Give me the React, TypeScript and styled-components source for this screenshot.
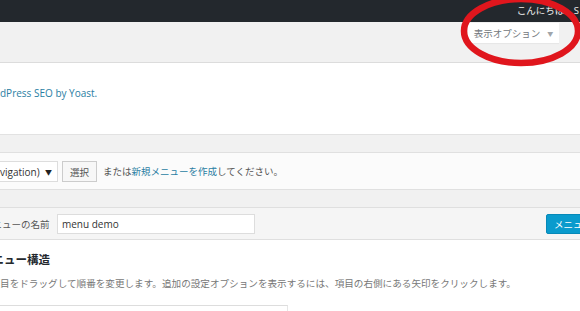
import React from "react";
import styled, { createGlobalStyle } from "styled-components";

const Global = createGlobalStyle`
  html, body { margin: 0; padding: 0; background: #f1f1f1; }
  body { width: 580px; height: 311px; overflow: hidden; font-family: "Open Sans", "Noto Sans CJK JP", sans-serif; }
  #root { position: relative; width: 580px; height: 311px; overflow: hidden; }
`;

const jp = `"Open Sans", "Noto Sans CJK JP", sans-serif`;

const AdminBar = styled.div`
  height: 22px;
  background: #23282d;
  display: flex;
  justify-content: flex-end;
  align-items: center;
  overflow: hidden;
`;

const Howdy = styled.span`
  font-family: ${jp};
  font-size: 9.5px;
  color: #eee;
  white-space: nowrap;
  margin-right: 1px;
  margin-top: -2px;
`;

const ScreenMeta = styled.div`
  height: 40px;
  display: flex;
  justify-content: flex-end;
  padding-right: 21px;
`;

const ScreenTab = styled.div`
  margin-top: 1px;
  height: 20px;
  width: 91px;
  background: #fff;
  box-shadow: 0 1px 1px rgba(0,0,0,0.04);
  display: flex;
  align-items: center;
  justify-content: center;
  gap: 7px;
  font-family: ${jp};
  font-size: 9.5px;
  color: #72777c;
`;

const Caret = styled.span`
  font-size: 6px;
  color: #a0a5aa;
`;

const Notice = styled.div`
  height: 48px;
  padding-top: 23px;
  background: #fff;
  border-top: 1px solid #dcdcdc;
  border-bottom: 1px solid #e2e2e2;
  display: flex;
  align-items: flex-start;
`;

const NoticeText = styled.span`
  font-size: 10px;
  line-height: 14px;
  color: #2a7ea3;
`;

const Gap = styled.div<{ h: number }>`
  height: ${(p) => p.h}px;
`;

const ManageBox = styled.div`
  height: 36px;
  background: #fbfbfb;
  border-top: 1px solid #e0e0e0;
  border-bottom: 1px solid #e0e0e0;
  display: flex;
  align-items: center;
  gap: 4px;
`;

const SelectBox = styled.div`
  height: 21px;
  width: 58px;
  background: #fff;
  border: 1px solid #ddd;
  border-left: none;
  display: flex;
  align-items: center;
  justify-content: space-between;
  padding-right: 5px;
  box-sizing: border-box;
  font-size: 10px;
  color: #333;
  margin-top: 1px;
`;

const SelectCaret = styled.span`
  font-size: 7px;
  color: #222;
`;

const Button = styled.div`
  height: 21px;
  width: 35px;
  box-sizing: border-box;
  border: 1px solid #ccc;
  background: #f7f7f7;
  display: flex;
  align-items: center;
  justify-content: center;
  font-family: ${jp};
  font-size: 9.5px;
  color: #555;
  margin-top: 1px;
`;

const InfoText = styled.span`
  font-family: ${jp};
  font-size: 9.5px;
  color: #555;
  margin-left: 2px;
`;

const Link = styled.span`
  color: #2a7ea3;
`;

const MenuHeader = styled.div`
  height: 31px;
  background: #f5f5f5;
  border-top: 1px solid #dfdfdf;
  border-bottom: 1px solid #dfdfdf;
  display: flex;
  align-items: center;
  overflow: hidden;
`;

const LabelBox = styled.div`
  width: 57px;
  flex-shrink: 0;
  overflow: hidden;
`;

const Label = styled.span`
  display: block;
  font-family: ${jp};
  font-size: 9.5px;
  color: #555;
  white-space: nowrap;
  margin-left: -17px;
`;

const NameInput = styled.div`
  width: 198px;
  height: 20px;
  box-sizing: border-box;
  background: #fff;
  border: 1px solid #ddd;
  display: flex;
  align-items: center;
  padding-left: 4px;
  font-size: 10px;
  color: #333;
`;

const SaveButton = styled.div`
  margin-left: auto;
  margin-right: -40px;
  height: 20px;
  width: 74px;
  box-sizing: border-box;
  background: #0a9bcd;
  border: 1px solid #0789b8;
  border-radius: 2px;
  display: flex;
  align-items: center;
  padding-left: 7px;
  font-family: ${jp};
  font-size: 9.5px;
  color: #fff;
  white-space: nowrap;
`;

const Body = styled.div`
  background: #fff;
  height: 80px;
  padding-top: 11px;
  box-sizing: border-box;
  overflow: hidden;
`;

const Heading = styled.h3`
  margin: 0 0 0 -19px;
  font-family: ${jp};
  font-size: 11.5px;
  font-weight: 700;
  color: #23282d;
  line-height: 18px;
`;

const Desc = styled.p`
  margin: 8px 0 0 -9.5px;
  font-family: ${jp};
  font-size: 9.6px;
  color: #777;
  line-height: 14px;
  white-space: nowrap;
`;

const Rule = styled.div`
  margin-top: 14px;
  width: 287px;
  height: 8px;
  border-top: 1px solid #ddd;
  border-right: 1px solid #e6e6e6;
`;

const Ellipse = styled.svg`
  position: absolute;
  left: 458px;
  top: -7px;
  pointer-events: none;
`;

export default function App() {
  return (
    <>
      <Global />
      <AdminBar>
        <Howdy>こんにちは、S</Howdy>
      </AdminBar>
      <ScreenMeta>
        <ScreenTab>
          表示オプション<Caret>▼</Caret>
        </ScreenTab>
      </ScreenMeta>
      <Notice>
        <NoticeText>dPress SEO by Yoast.</NoticeText>
      </Notice>
      <Gap h={17} />
      <ManageBox>
        <SelectBox>
          vigation)<SelectCaret>▼</SelectCaret>
        </SelectBox>
        <Button>選択</Button>
        <InfoText>
          または<Link>新規メニューを作成</Link>してください。
        </InfoText>
      </ManageBox>
      <Gap h={17} />
      <MenuHeader>
        <LabelBox>
          <Label>メニューの名前</Label>
        </LabelBox>
        <NameInput>menu demo</NameInput>
        <SaveButton>メニューを保存</SaveButton>
      </MenuHeader>
      <Body>
        <Heading>メニュー構造</Heading>
        <Desc>項目をドラッグして順番を変更します。追加の設定オプションを表示するには、項目の右側にある矢印をクリックします。</Desc>
        <Rule />
      </Body>
      <Ellipse width="126" height="76" viewBox="0 0 126 76">
        <ellipse cx="63" cy="38" rx="57" ry="32" fill="none" stroke="#e0161d" strokeWidth="6.5" />
      </Ellipse>
    </>
  );
}
